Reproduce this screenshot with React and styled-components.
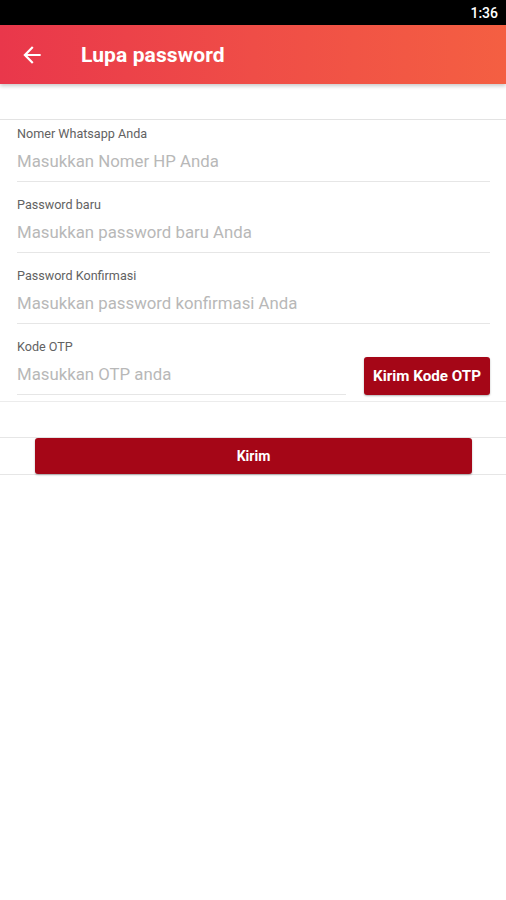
import React from "react";
import styled, { createGlobalStyle } from "styled-components";

const GlobalStyle = createGlobalStyle`
  html, body {
    margin: 0;
    padding: 0;
    background: #ffffff;
    font-family: Roboto, "Liberation Sans", sans-serif;
  }
  * {
    box-sizing: border-box;
  }
`;

const Screen = styled.div`
  width: 506px;
  min-height: 900px;
  background: #fff;
  display: flex;
  flex-direction: column;
`;

const StatusBar = styled.div`
  height: 25px;
  background: #000;
  color: #fff;
  display: flex;
  align-items: center;
  justify-content: flex-end;
  padding-right: 8px;
  font-size: 14px;
  font-weight: 500;
`;

const AppBar = styled.header`
  height: 59px;
  background: linear-gradient(90deg, #e9374b 0%, #ef4d47 50%, #f45f42 100%);
  display: flex;
  align-items: center;
  padding-left: 19px;
  box-shadow: 0 2px 4px rgba(0, 0, 0, 0.22);
  position: relative;
  z-index: 1;
`;

const BackButton = styled.button`
  width: 26px;
  height: 26px;
  padding: 0;
  border: 0;
  background: none;
  display: flex;
  align-items: center;
  justify-content: center;
`;

const Title = styled.h1`
  margin: 0 0 0 36px;
  color: #fff;
  font-size: 21px;
  font-weight: 700;
  letter-spacing: 0.1px;
`;

const Form = styled.section`
  margin-top: 35px;
  border-top: 1px solid #e3e3e3;
  border-bottom: 1px solid #ececec;
  padding: 6px 16px 6px 17px;
  display: flex;
  flex-direction: column;
  gap: 15px;
`;

const Row = styled.div`
  display: flex;
  align-items: flex-end;
`;

const Field = styled.div`
  flex: 1;
  display: flex;
  flex-direction: column;
  padding-bottom: 5px;
  border-bottom: 1px solid #e6e6e6;
`;

const Label = styled.label`
  font-size: 12.6px;
  line-height: 16px;
  color: #626262;
`;

const Input = styled.input`
  margin-top: 4px;
  height: 30px;
  border: 0;
  outline: none;
  padding: 0;
  font-family: inherit;
  font-size: 16.8px;
  color: #333;
  background: transparent;
  &::placeholder {
    color: #b8b8b8;
  }
`;

const RedButton = styled.button`
  border: 0;
  border-radius: 3px;
  background: #a50617;
  color: #fff;
  font-family: inherit;
  font-weight: 700;
  font-size: ${(p) => p.$size || "14px"};
  box-shadow: 0 1px 2px rgba(0, 0, 0, 0.3);
`;

const OtpButton = styled(RedButton)`
  width: 126px;
  height: 38px;
  margin-left: 18px;
  padding: 0;
`;

const Footer = styled.div`
  margin-top: 35px;
  border-top: 1px solid #e6e6e6;
  border-bottom: 1px solid #e6e6e6;
  padding: 0 34px 0 35px;
  display: flex;
`;

const SubmitButton = styled(RedButton)`
  flex: 1;
  height: 36px;
`;

const fields = [
  { label: "Nomer Whatsapp Anda", placeholder: "Masukkan Nomer HP Anda" },
  { label: "Password baru", placeholder: "Masukkan password baru Anda" },
  { label: "Password Konfirmasi", placeholder: "Masukkan password konfirmasi Anda" },
];

export default function App() {
  return (
    <Screen>
      <GlobalStyle />
      <StatusBar>1:36</StatusBar>
      <AppBar>
        <BackButton aria-label="Kembali">
          <svg width="26" height="26" viewBox="0 0 24 24">
            <path
              fill="#fff"
              d="M20 11H7.83l5.59-5.59L12 4l-8 8 8 8 1.41-1.41L7.83 13H20v-2z"
            />
          </svg>
        </BackButton>
        <Title>Lupa password</Title>
      </AppBar>

      <Form>
        {fields.map((f) => (
          <Field key={f.label}>
            <Label>{f.label}</Label>
            <Input placeholder={f.placeholder} />
          </Field>
        ))}
        <Row>
          <Field>
            <Label>Kode OTP</Label>
            <Input placeholder="Masukkan OTP anda" />
          </Field>
          <OtpButton $size="15.2px">Kirim Kode OTP</OtpButton>
        </Row>
      </Form>

      <Footer>
        <SubmitButton>Kirim</SubmitButton>
      </Footer>
    </Screen>
  );
}
